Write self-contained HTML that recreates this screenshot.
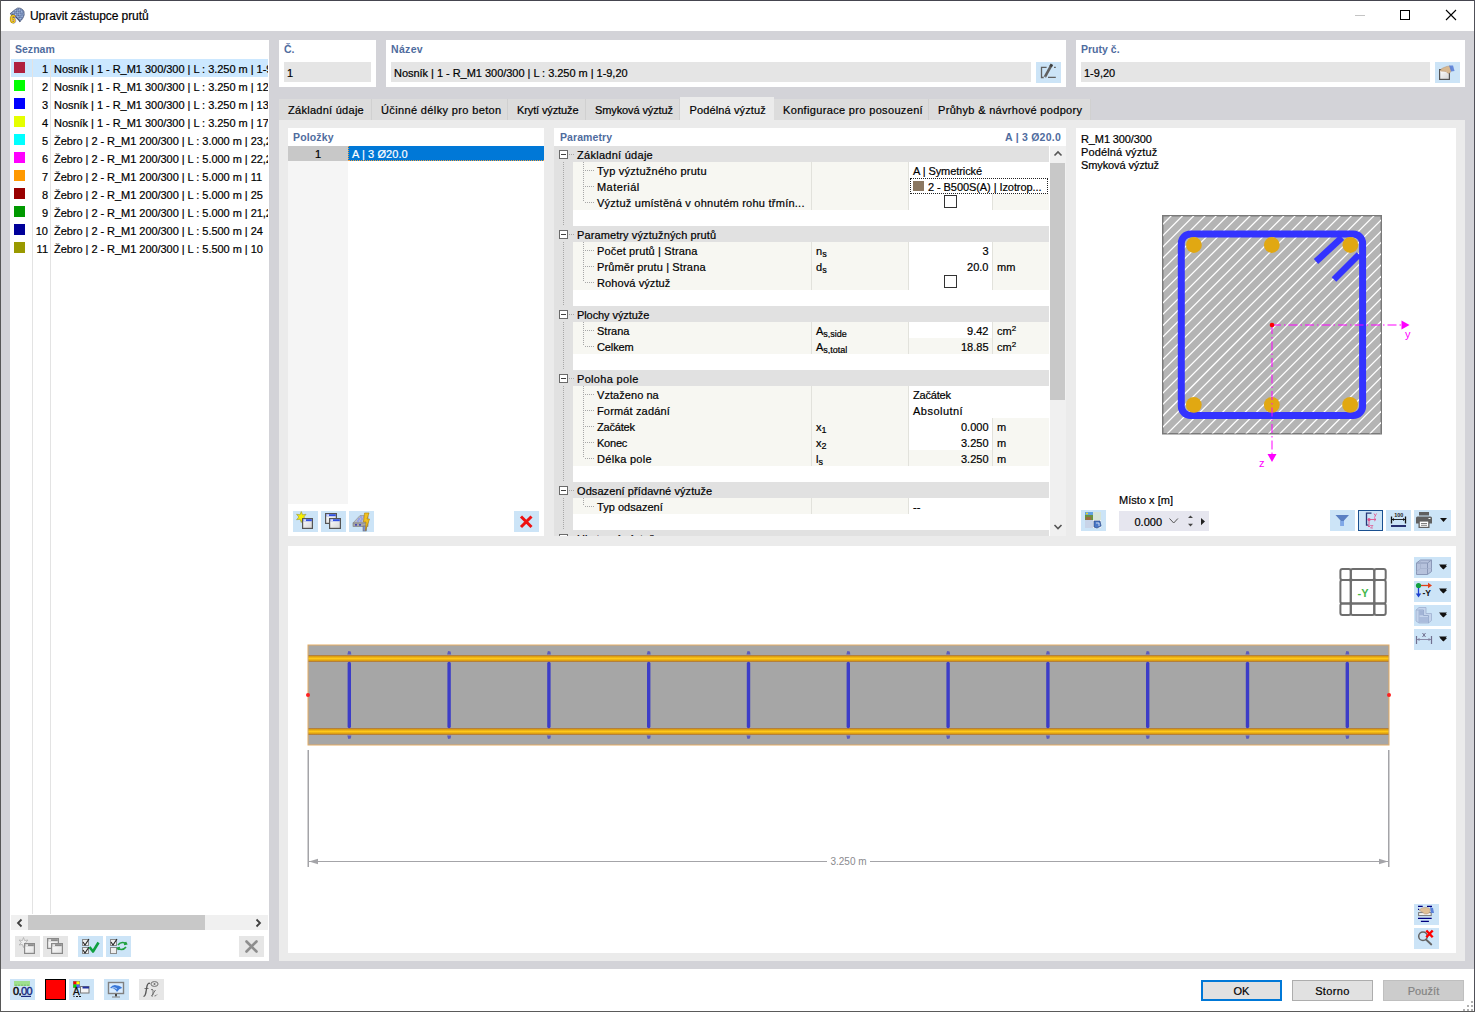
<!DOCTYPE html><html><head><meta charset="utf-8"><style>
*{margin:0;padding:0;box-sizing:border-box}
html,body{width:1475px;height:1012px;overflow:hidden;background:#fff}
body{position:relative;font-family:"Liberation Sans",sans-serif;font-size:11px;color:#000}
.a{position:absolute}
.t{white-space:nowrap;-webkit-text-stroke:0.2px currentColor}
svg{position:absolute;overflow:visible}
</style></head><body>
<div class="a" style="left:0px;top:0px;width:1475px;height:1012px;background:#ffffff;"></div>
<div class="a" style="left:1px;top:31px;width:1473px;height:938px;background:#d3d3d8;"></div>
<div class="a" style="left:0px;top:0px;width:1475px;height:1px;background:#45454f;"></div>
<div class="a" style="left:0px;top:0px;width:1px;height:1012px;background:#575757;"></div>
<div class="a" style="left:1474px;top:0px;width:1px;height:1012px;background:#505058;"></div>
<div class="a" style="left:0px;top:1011px;width:1475px;height:1px;background:#5a5a5a;"></div>
<div class="a t " style="left:30px;top:8.84px;font-size:12px;line-height:14px;color:#000;letter-spacing:-0.066px;">Upravit zástupce prutů</div>
<svg style="left:4px;top:4px" width="24" height="24" viewBox="0 0 24 24">
<defs><pattern id="chk" patternUnits="userSpaceOnUse" width="3" height="3" patternTransform="rotate(40)"><rect width="3" height="3" fill="#5a6e9a"/><rect width="1.5" height="1.5" fill="#b8cef0"/><rect x="1.5" y="1.5" width="1.5" height="1.5" fill="#8aa2d0"/></pattern></defs>
<path d="M6 9.8 Q10 6 13.5 4 Q18 3.5 20 7.5 Q21 11 19 14 Q17.5 16.5 16 17.5 L11 12.5 Z" fill="url(#chk)" stroke="#3a4668" stroke-width="0.6"/>
<path d="M11 12 L16 17.5 Q15.5 17.8 15 17.2" fill="none" stroke="#2a3658" stroke-width="0.8"/>
<text x="9" y="18.7" font-size="10" font-weight="bold" text-anchor="middle" fill="#f8d020" stroke="#5a4a10" stroke-width="0.9" paint-order="stroke" font-family="Liberation Sans">6</text>
</svg>
<div class="a" style="left:1355px;top:15px;width:10px;height:1px;background:#c4c4c4;"></div>
<div class="a" style="left:1400px;top:10px;width:10px;height:10px;border:1px solid #000"></div>
<svg style="left:1445px;top:9px" width="12" height="12"><path d="M1 1 L11 11 M11 1 L1 11" stroke="#000" stroke-width="1.1"/></svg>
<div class="a" style="left:10px;top:40px;width:259px;height:921px;background:#ffffff;"></div>
<div class="a" style="left:279px;top:40px;width:97px;height:47px;background:#ffffff;"></div>
<div class="a" style="left:386px;top:40px;width:680px;height:47px;background:#ffffff;"></div>
<div class="a" style="left:1076px;top:40px;width:389px;height:47px;background:#ffffff;"></div>
<div class="a" style="left:279px;top:120px;width:1186px;height:841px;background:#ebebeb;"></div>
<div class="a" style="left:288px;top:128px;width:256px;height:408px;background:#ffffff;"></div>
<div class="a" style="left:554px;top:128px;width:512px;height:408px;background:#ffffff;"></div>
<div class="a" style="left:1076px;top:128px;width:380px;height:408px;background:#ffffff;"></div>
<div class="a" style="left:288px;top:546px;width:1168px;height:407px;background:#ffffff;"></div>
<div class="a t " style="left:15px;top:42.86px;font-size:10.5px;line-height:13px;color:#4f6c9e;font-weight:bold;-webkit-text-stroke:0;letter-spacing:0.011px;">Seznam</div>
<div class="a t " style="left:284px;top:42.86px;font-size:10.5px;line-height:13px;color:#4f6c9e;font-weight:bold;-webkit-text-stroke:0;">Č.</div>
<div class="a t " style="left:391px;top:42.86px;font-size:10.5px;line-height:13px;color:#4f6c9e;font-weight:bold;-webkit-text-stroke:0;letter-spacing:0.322px;">Název</div>
<div class="a t " style="left:1081px;top:42.86px;font-size:10.5px;line-height:13px;color:#4f6c9e;font-weight:bold;-webkit-text-stroke:0;letter-spacing:0.015px;">Pruty č.</div>
<div class="a" style="left:284px;top:62px;width:87px;height:20px;background:#e5e5e5;"></div>
<div class="a t " style="left:287px;top:66.69px;font-size:11px;line-height:13px;color:#000;">1</div>
<div class="a" style="left:391px;top:62px;width:640px;height:20px;background:#e5e5e5;"></div>
<div class="a t " style="left:394px;top:66.69px;font-size:11px;line-height:13px;color:#000;letter-spacing:-0.030px;">Nosník | 1 - R_M1 300/300 | L : 3.250 m | 1-9,20</div>
<div class="a" style="left:1081px;top:62px;width:349px;height:20px;background:#e5e5e5;"></div>
<div class="a t " style="left:1084px;top:66.69px;font-size:11px;line-height:13px;color:#000;">1-9,20</div>
<div class="a" style="left:1036px;top:62px;width:25px;height:21px;background:#cce4f7;"></div>
<div class="a" style="left:1435px;top:62px;width:25px;height:21px;background:#cce4f7;"></div>
<div class="a" style="left:279px;top:99px;width:93px;height:21px;background:#dcdcdc;"></div>
<div class="a" style="left:371px;top:99px;width:1px;height:21px;background:#d0d0d0;"></div>
<div class="a t " style="left:288px;top:104.19px;font-size:11px;line-height:13px;color:#000;letter-spacing:0.274px;">Základní údaje</div>
<div class="a" style="left:372px;top:99px;width:136px;height:21px;background:#dcdcdc;"></div>
<div class="a" style="left:507px;top:99px;width:1px;height:21px;background:#d0d0d0;"></div>
<div class="a t " style="left:381px;top:104.19px;font-size:11px;line-height:13px;color:#000;letter-spacing:0.367px;">Účinné délky pro beton</div>
<div class="a" style="left:508px;top:99px;width:78px;height:21px;background:#dcdcdc;"></div>
<div class="a" style="left:585px;top:99px;width:1px;height:21px;background:#d0d0d0;"></div>
<div class="a t " style="left:517px;top:104.19px;font-size:11px;line-height:13px;color:#000;letter-spacing:-0.120px;">Krytí výztuže</div>
<div class="a" style="left:586px;top:99px;width:94px;height:21px;background:#dcdcdc;"></div>
<div class="a" style="left:679px;top:99px;width:1px;height:21px;background:#d0d0d0;"></div>
<div class="a t " style="left:595px;top:104.19px;font-size:11px;line-height:13px;color:#000;letter-spacing:-0.113px;">Smyková výztuž</div>
<div class="a" style="left:680px;top:97px;width:94px;height:23px;background:#ebebeb;"></div>
<div class="a t " style="left:689.5px;top:104.19px;font-size:11px;line-height:13px;color:#000;letter-spacing:0.131px;">Podélná výztuž</div>
<div class="a" style="left:774px;top:99px;width:155px;height:21px;background:#dcdcdc;"></div>
<div class="a" style="left:928px;top:99px;width:1px;height:21px;background:#d0d0d0;"></div>
<div class="a t " style="left:783px;top:104.19px;font-size:11px;line-height:13px;color:#000;letter-spacing:0.341px;">Konfigurace pro posouzení</div>
<div class="a" style="left:929px;top:99px;width:162px;height:21px;background:#dcdcdc;"></div>
<div class="a" style="left:1090px;top:99px;width:1px;height:21px;background:#d0d0d0;"></div>
<div class="a t " style="left:938px;top:104.19px;font-size:11px;line-height:13px;color:#000;letter-spacing:0.318px;">Průhyb &amp; návrhové podpory</div>
<div class="a" style="left:11px;top:59px;width:257px;height:18px;background:#cce8ff;"></div>
<div class="a" style="left:32px;top:59px;width:1px;height:855px;background:#e3e3e3;"></div>
<div class="a" style="left:50px;top:59px;width:1px;height:855px;background:#e3e3e3;"></div>
<div class="a" style="left:11px;top:59px;width:257px;height:200px;overflow:hidden">
<div class="a" style="left:3px;top:3px;width:11px;height:11px;background:#b0213f"></div>
<div class="a t" style="left:0px;width:37px;text-align:right;top:4.19px;line-height:13px">1</div>
<div class="a t" style="left:43px;top:4.19px;line-height:13px;letter-spacing:-0.030px">Nosník | 1 - R_M1 300/300 | L : 3.250 m | 1-9,20</div>
<div class="a" style="left:3px;top:21px;width:11px;height:11px;background:#00ff00"></div>
<div class="a t" style="left:0px;width:37px;text-align:right;top:22.19px;line-height:13px">2</div>
<div class="a t" style="left:43px;top:22.19px;line-height:13px;letter-spacing:-0.030px">Nosník | 1 - R_M1 300/300 | L : 3.250 m | 12,14</div>
<div class="a" style="left:3px;top:39px;width:11px;height:11px;background:#0000ff"></div>
<div class="a t" style="left:0px;width:37px;text-align:right;top:40.19px;line-height:13px">3</div>
<div class="a t" style="left:43px;top:40.19px;line-height:13px;letter-spacing:-0.030px">Nosník | 1 - R_M1 300/300 | L : 3.250 m | 13,15</div>
<div class="a" style="left:3px;top:57px;width:11px;height:11px;background:#e5ff00"></div>
<div class="a t" style="left:0px;width:37px;text-align:right;top:58.19px;line-height:13px">4</div>
<div class="a t" style="left:43px;top:58.19px;line-height:13px;letter-spacing:-0.030px">Nosník | 1 - R_M1 300/300 | L : 3.250 m | 17,19</div>
<div class="a" style="left:3px;top:75px;width:11px;height:11px;background:#00ffff"></div>
<div class="a t" style="left:0px;width:37px;text-align:right;top:76.19px;line-height:13px">5</div>
<div class="a t" style="left:43px;top:76.19px;line-height:13px;letter-spacing:-0.041px">Žebro | 2 - R_M1 200/300 | L : 3.000 m | 23,26</div>
<div class="a" style="left:3px;top:93px;width:11px;height:11px;background:#ff00ff"></div>
<div class="a t" style="left:0px;width:37px;text-align:right;top:94.19px;line-height:13px">6</div>
<div class="a t" style="left:43px;top:94.19px;line-height:13px;letter-spacing:-0.041px">Žebro | 2 - R_M1 200/300 | L : 5.000 m | 22,27</div>
<div class="a" style="left:3px;top:111px;width:11px;height:11px;background:#ff9900"></div>
<div class="a t" style="left:0px;width:37px;text-align:right;top:112.19px;line-height:13px">7</div>
<div class="a t" style="left:43px;top:112.19px;line-height:13px;letter-spacing:-0.041px">Žebro | 2 - R_M1 200/300 | L : 5.000 m | 11</div>
<div class="a" style="left:3px;top:129px;width:11px;height:11px;background:#990000"></div>
<div class="a t" style="left:0px;width:37px;text-align:right;top:130.19px;line-height:13px">8</div>
<div class="a t" style="left:43px;top:130.19px;line-height:13px;letter-spacing:-0.041px">Žebro | 2 - R_M1 200/300 | L : 5.000 m | 25</div>
<div class="a" style="left:3px;top:147px;width:11px;height:11px;background:#009900"></div>
<div class="a t" style="left:0px;width:37px;text-align:right;top:148.19px;line-height:13px">9</div>
<div class="a t" style="left:43px;top:148.19px;line-height:13px;letter-spacing:-0.041px">Žebro | 2 - R_M1 200/300 | L : 5.000 m | 21,28</div>
<div class="a" style="left:3px;top:165px;width:11px;height:11px;background:#000099"></div>
<div class="a t" style="left:0px;width:37px;text-align:right;top:166.19px;line-height:13px">10</div>
<div class="a t" style="left:43px;top:166.19px;line-height:13px;letter-spacing:-0.041px">Žebro | 2 - R_M1 200/300 | L : 5.500 m | 24</div>
<div class="a" style="left:3px;top:183px;width:11px;height:11px;background:#999900"></div>
<div class="a t" style="left:0px;width:37px;text-align:right;top:184.19px;line-height:13px">11</div>
<div class="a t" style="left:43px;top:184.19px;line-height:13px;letter-spacing:-0.041px">Žebro | 2 - R_M1 200/300 | L : 5.500 m | 10</div>
</div>
<div class="a" style="left:11px;top:915px;width:257px;height:15px;background:#f0f0f0;"></div>
<div class="a" style="left:28px;top:915px;width:177px;height:15px;background:#c8c8c8;"></div>
<svg style="left:15px;top:917px" width="10" height="12"><path d="M6.5 2.5 L3 6 L6.5 9.5" stroke="#404040" stroke-width="1.8" fill="none"/></svg>
<svg style="left:253px;top:917px" width="10" height="12"><path d="M3.5 2.5 L7 6 L3.5 9.5" stroke="#404040" stroke-width="1.8" fill="none"/></svg>
<div class="a" style="left:15px;top:936px;width:25px;height:21px;background:#e6e6e6;"></div>
<div class="a" style="left:43px;top:936px;width:25px;height:21px;background:#e6e6e6;"></div>
<div class="a" style="left:78px;top:936px;width:25px;height:21px;background:#cce4f7;"></div>
<div class="a" style="left:106px;top:936px;width:25px;height:21px;background:#cce4f7;"></div>
<div class="a" style="left:239px;top:936px;width:25px;height:21px;background:#e6e6e6;"></div>
<div class="a t " style="left:293px;top:130.86px;font-size:10.5px;line-height:13px;color:#4f6c9e;font-weight:bold;-webkit-text-stroke:0;letter-spacing:0.144px;">Položky</div>
<div class="a" style="left:288px;top:146px;width:60px;height:15px;background:#c8c8c8;"></div>
<div class="a" style="left:288px;top:161px;width:60px;height:343px;background:#f5f5f5;"></div>
<div class="a" style="left:348px;top:146px;width:196px;height:15px;background:#0078d7;"></div>
<div class="a" style="left:348px;top:146px;width:196px;height:15px;border-left:1px dotted #f0a040;border-bottom:1px dotted #f0a040"></div>
<div class="a t " style="left:288.0px;width:60px;text-align:center;top:147.69px;font-size:11px;line-height:13px;color:#000;">1</div>
<div class="a t " style="left:352px;top:147.69px;font-size:11px;line-height:13px;color:#fff;letter-spacing:0.087px;">A | 3 Ø20.0</div>
<div class="a" style="left:293px;top:511px;width:25px;height:21px;background:#cce4f7;"></div>
<div class="a" style="left:321px;top:511px;width:25px;height:21px;background:#cce4f7;"></div>
<div class="a" style="left:349px;top:511px;width:25px;height:21px;background:#cce4f7;"></div>
<div class="a" style="left:514px;top:511px;width:25px;height:21px;background:#cce4f7;"></div>
<div class="a t " style="left:560px;top:130.86px;font-size:10.5px;line-height:13px;color:#4f6c9e;font-weight:bold;-webkit-text-stroke:0;letter-spacing:0.084px;">Parametry</div>
<div class="a t " style="right:414px;top:130.86px;font-size:10.5px;line-height:13px;color:#4f6c9e;font-weight:bold;-webkit-text-stroke:0;letter-spacing:0.232px;">A | 3 Ø20.0</div>
<style>.tr sub{font-size:9px;vertical-align:-1.5px;line-height:0}.tr sup{font-size:8px;vertical-align:4px;line-height:0}</style>
<div class="a tr" style="left:554px;top:146px;width:495px;height:390px;overflow:hidden">
<div class="a" style="left:0px;top:0px;width:19px;height:390px;background:#e1e1e1;"></div>
<div class="a" style="left:9px;top:0px;width:1px;height:390px;background:repeating-linear-gradient(to bottom,#a8a8a8 0 1px,transparent 1px 2px)"></div>
<div class="a" style="left:0px;top:0px;width:495px;height:16px;background:#e1e1e1;"></div>
<div class="a" style="left:5px;top:4px;width:9px;height:9px;background:#fff;border:1px solid #6a6a6a"></div>
<div class="a" style="left:7px;top:8px;width:5px;height:1px;background:#404040;"></div>
<div class="a" style="left:15px;top:8px;width:6px;height:1px;background:repeating-linear-gradient(to right,#a8a8a8 0 1px,transparent 1px 2px)"></div>
<div class="a t" style="left:23px;top:2.19px;line-height:14px;font-size:11px;color:#000;letter-spacing:0.274px;">Základní údaje</div>
<div class="a" style="left:19px;top:16px;width:476px;height:16px;background:#f7f7f2;"></div>
<div class="a" style="left:354px;top:16px;width:141px;height:16px;background:#fff;"></div>
<div class="a" style="left:257px;top:16px;width:1px;height:16px;background:#e2e2dc;"></div>
<div class="a" style="left:354px;top:16px;width:1px;height:16px;background:#e2e2dc;"></div>
<div class="a" style="left:29px;top:16px;width:1px;height:16px;background:repeating-linear-gradient(to bottom,#a8a8a8 0 1px,transparent 1px 2px)"></div>
<div class="a" style="left:31px;top:24px;width:9px;height:1px;background:repeating-linear-gradient(to right,#a8a8a8 0 1px,transparent 1px 2px)"></div>
<div class="a t" style="left:43px;top:17.69px;line-height:14px;font-size:11px;color:#000;letter-spacing:0.261px;">Typ výztužného prutu</div>
<div class="a t" style="left:359px;top:17.69px;line-height:14px;font-size:11px;color:#000;letter-spacing:-0.076px;">A | Symetrické</div>
<div class="a" style="left:19px;top:32px;width:476px;height:16px;background:#f7f7f2;"></div>
<div class="a" style="left:354px;top:32px;width:141px;height:16px;background:#fff;"></div>
<div class="a" style="left:257px;top:32px;width:1px;height:16px;background:#e2e2dc;"></div>
<div class="a" style="left:354px;top:32px;width:1px;height:16px;background:#e2e2dc;"></div>
<div class="a" style="left:29px;top:32px;width:1px;height:16px;background:repeating-linear-gradient(to bottom,#a8a8a8 0 1px,transparent 1px 2px)"></div>
<div class="a" style="left:31px;top:40px;width:9px;height:1px;background:repeating-linear-gradient(to right,#a8a8a8 0 1px,transparent 1px 2px)"></div>
<div class="a t" style="left:43px;top:33.69px;line-height:14px;font-size:11px;color:#000;letter-spacing:0.432px;">Materiál</div>
<div class="a" style="left:356px;top:32px;width:138px;height:16px;background:transparent;border:1px dotted #222"></div>
<div class="a" style="left:359px;top:35px;width:11px;height:10px;background:#8b7862;"></div>
<div class="a t" style="left:374px;top:33.69px;line-height:14px;font-size:11px;color:#000;letter-spacing:-0.075px;">2 - B500S(A) | Izotrop...</div>
<div class="a" style="left:19px;top:48px;width:476px;height:16px;background:#f7f7f2;"></div>
<div class="a" style="left:354px;top:48px;width:84px;height:16px;background:#fff;"></div>
<div class="a" style="left:257px;top:48px;width:1px;height:16px;background:#e2e2dc;"></div>
<div class="a" style="left:354px;top:48px;width:1px;height:16px;background:#e2e2dc;"></div>
<div class="a" style="left:438px;top:48px;width:1px;height:16px;background:#e2e2dc;"></div>
<div class="a" style="left:29px;top:48px;width:1px;height:8px;background:repeating-linear-gradient(to bottom,#a8a8a8 0 1px,transparent 1px 2px)"></div>
<div class="a" style="left:31px;top:56px;width:9px;height:1px;background:repeating-linear-gradient(to right,#a8a8a8 0 1px,transparent 1px 2px)"></div>
<div class="a t" style="left:43px;top:49.69px;line-height:14px;font-size:11px;color:#000;letter-spacing:0.247px;">Výztuž umístěná v ohnutém rohu třmín...</div>
<div class="a" style="left:390px;top:49px;width:13px;height:13px;background:#fff;border:1px solid #333"></div>
<div class="a" style="left:19px;top:64px;width:476px;height:16px;background:#fff;"></div>
<div class="a" style="left:0px;top:80px;width:495px;height:16px;background:#e1e1e1;"></div>
<div class="a" style="left:5px;top:84px;width:9px;height:9px;background:#fff;border:1px solid #6a6a6a"></div>
<div class="a" style="left:7px;top:88px;width:5px;height:1px;background:#404040;"></div>
<div class="a" style="left:15px;top:88px;width:6px;height:1px;background:repeating-linear-gradient(to right,#a8a8a8 0 1px,transparent 1px 2px)"></div>
<div class="a t" style="left:23px;top:82.19px;line-height:14px;font-size:11px;color:#000;letter-spacing:0.108px;">Parametry výztužných prutů</div>
<div class="a" style="left:19px;top:96px;width:476px;height:16px;background:#f7f7f2;"></div>
<div class="a" style="left:354px;top:96px;width:84px;height:16px;background:#fff;"></div>
<div class="a" style="left:257px;top:96px;width:1px;height:16px;background:#e2e2dc;"></div>
<div class="a" style="left:354px;top:96px;width:1px;height:16px;background:#e2e2dc;"></div>
<div class="a" style="left:438px;top:96px;width:1px;height:16px;background:#e2e2dc;"></div>
<div class="a" style="left:29px;top:96px;width:1px;height:16px;background:repeating-linear-gradient(to bottom,#a8a8a8 0 1px,transparent 1px 2px)"></div>
<div class="a" style="left:31px;top:104px;width:9px;height:1px;background:repeating-linear-gradient(to right,#a8a8a8 0 1px,transparent 1px 2px)"></div>
<div class="a t" style="left:43px;top:97.69px;line-height:14px;font-size:11px;color:#000;letter-spacing:0.146px;">Počet prutů | Strana</div>
<div class="a t" style="left:262px;top:97.69px;line-height:14px;font-size:11px;color:#000;">n<sub>s</sub></div>
<div class="a t" style="left:354.5px;width:80px;text-align:right;top:97.69px;line-height:14px;font-size:11px;color:#000;">3</div>
<div class="a" style="left:19px;top:112px;width:476px;height:16px;background:#f7f7f2;"></div>
<div class="a" style="left:354px;top:112px;width:84px;height:16px;background:#fff;"></div>
<div class="a" style="left:257px;top:112px;width:1px;height:16px;background:#e2e2dc;"></div>
<div class="a" style="left:354px;top:112px;width:1px;height:16px;background:#e2e2dc;"></div>
<div class="a" style="left:438px;top:112px;width:1px;height:16px;background:#e2e2dc;"></div>
<div class="a" style="left:29px;top:112px;width:1px;height:16px;background:repeating-linear-gradient(to bottom,#a8a8a8 0 1px,transparent 1px 2px)"></div>
<div class="a" style="left:31px;top:120px;width:9px;height:1px;background:repeating-linear-gradient(to right,#a8a8a8 0 1px,transparent 1px 2px)"></div>
<div class="a t" style="left:43px;top:113.69px;line-height:14px;font-size:11px;color:#000;letter-spacing:0.147px;">Průměr prutu | Strana</div>
<div class="a t" style="left:262px;top:113.69px;line-height:14px;font-size:11px;color:#000;">d<sub>s</sub></div>
<div class="a t" style="left:354.5px;width:80px;text-align:right;top:113.69px;line-height:14px;font-size:11px;color:#000;">20.0</div>
<div class="a t" style="left:443px;top:113.69px;line-height:14px;font-size:11px;color:#000;">mm</div>
<div class="a" style="left:19px;top:128px;width:476px;height:16px;background:#f7f7f2;"></div>
<div class="a" style="left:354px;top:128px;width:84px;height:16px;background:#fff;"></div>
<div class="a" style="left:257px;top:128px;width:1px;height:16px;background:#e2e2dc;"></div>
<div class="a" style="left:354px;top:128px;width:1px;height:16px;background:#e2e2dc;"></div>
<div class="a" style="left:438px;top:128px;width:1px;height:16px;background:#e2e2dc;"></div>
<div class="a" style="left:29px;top:128px;width:1px;height:8px;background:repeating-linear-gradient(to bottom,#a8a8a8 0 1px,transparent 1px 2px)"></div>
<div class="a" style="left:31px;top:136px;width:9px;height:1px;background:repeating-linear-gradient(to right,#a8a8a8 0 1px,transparent 1px 2px)"></div>
<div class="a t" style="left:43px;top:129.69px;line-height:14px;font-size:11px;color:#000;letter-spacing:0.096px;">Rohová výztuž</div>
<div class="a" style="left:390px;top:129px;width:13px;height:13px;background:#fff;border:1px solid #333"></div>
<div class="a" style="left:19px;top:144px;width:476px;height:16px;background:#fff;"></div>
<div class="a" style="left:0px;top:160px;width:495px;height:16px;background:#e1e1e1;"></div>
<div class="a" style="left:5px;top:164px;width:9px;height:9px;background:#fff;border:1px solid #6a6a6a"></div>
<div class="a" style="left:7px;top:168px;width:5px;height:1px;background:#404040;"></div>
<div class="a" style="left:15px;top:168px;width:6px;height:1px;background:repeating-linear-gradient(to right,#a8a8a8 0 1px,transparent 1px 2px)"></div>
<div class="a t" style="left:23px;top:162.19px;line-height:14px;font-size:11px;color:#000;letter-spacing:-0.080px;">Plochy výztuže</div>
<div class="a" style="left:19px;top:176px;width:476px;height:16px;background:#f7f7f2;"></div>
<div class="a" style="left:354px;top:176px;width:84px;height:16px;background:#fff;"></div>
<div class="a" style="left:257px;top:176px;width:1px;height:16px;background:#e2e2dc;"></div>
<div class="a" style="left:354px;top:176px;width:1px;height:16px;background:#e2e2dc;"></div>
<div class="a" style="left:438px;top:176px;width:1px;height:16px;background:#e2e2dc;"></div>
<div class="a" style="left:29px;top:176px;width:1px;height:16px;background:repeating-linear-gradient(to bottom,#a8a8a8 0 1px,transparent 1px 2px)"></div>
<div class="a" style="left:31px;top:184px;width:9px;height:1px;background:repeating-linear-gradient(to right,#a8a8a8 0 1px,transparent 1px 2px)"></div>
<div class="a t" style="left:43px;top:177.69px;line-height:14px;font-size:11px;color:#000;">Strana</div>
<div class="a t" style="left:262px;top:177.69px;line-height:14px;font-size:11px;color:#000;">A<sub>s,side</sub></div>
<div class="a t" style="left:354.5px;width:80px;text-align:right;top:177.69px;line-height:14px;font-size:11px;color:#000;">9.42</div>
<div class="a t" style="left:443px;top:177.69px;line-height:14px;font-size:11px;color:#000;">cm<sup>2</sup></div>
<div class="a" style="left:19px;top:192px;width:476px;height:16px;background:#f7f7f2;"></div>
<div class="a" style="left:257px;top:192px;width:1px;height:16px;background:#e2e2dc;"></div>
<div class="a" style="left:354px;top:192px;width:1px;height:16px;background:#e2e2dc;"></div>
<div class="a" style="left:438px;top:192px;width:1px;height:16px;background:#e2e2dc;"></div>
<div class="a" style="left:29px;top:192px;width:1px;height:8px;background:repeating-linear-gradient(to bottom,#a8a8a8 0 1px,transparent 1px 2px)"></div>
<div class="a" style="left:31px;top:200px;width:9px;height:1px;background:repeating-linear-gradient(to right,#a8a8a8 0 1px,transparent 1px 2px)"></div>
<div class="a t" style="left:43px;top:193.69px;line-height:14px;font-size:11px;color:#000;letter-spacing:-0.125px;">Celkem</div>
<div class="a t" style="left:262px;top:193.69px;line-height:14px;font-size:11px;color:#000;">A<sub>s,total</sub></div>
<div class="a t" style="left:354.5px;width:80px;text-align:right;top:193.69px;line-height:14px;font-size:11px;color:#000;">18.85</div>
<div class="a t" style="left:443px;top:193.69px;line-height:14px;font-size:11px;color:#000;">cm<sup>2</sup></div>
<div class="a" style="left:19px;top:208px;width:476px;height:16px;background:#fff;"></div>
<div class="a" style="left:0px;top:224px;width:495px;height:16px;background:#e1e1e1;"></div>
<div class="a" style="left:5px;top:228px;width:9px;height:9px;background:#fff;border:1px solid #6a6a6a"></div>
<div class="a" style="left:7px;top:232px;width:5px;height:1px;background:#404040;"></div>
<div class="a" style="left:15px;top:232px;width:6px;height:1px;background:repeating-linear-gradient(to right,#a8a8a8 0 1px,transparent 1px 2px)"></div>
<div class="a t" style="left:23px;top:226.19px;line-height:14px;font-size:11px;color:#000;letter-spacing:0.321px;">Poloha pole</div>
<div class="a" style="left:19px;top:240px;width:476px;height:16px;background:#f7f7f2;"></div>
<div class="a" style="left:354px;top:240px;width:141px;height:16px;background:#fff;"></div>
<div class="a" style="left:257px;top:240px;width:1px;height:16px;background:#e2e2dc;"></div>
<div class="a" style="left:354px;top:240px;width:1px;height:16px;background:#e2e2dc;"></div>
<div class="a" style="left:29px;top:240px;width:1px;height:16px;background:repeating-linear-gradient(to bottom,#a8a8a8 0 1px,transparent 1px 2px)"></div>
<div class="a" style="left:31px;top:248px;width:9px;height:1px;background:repeating-linear-gradient(to right,#a8a8a8 0 1px,transparent 1px 2px)"></div>
<div class="a t" style="left:43px;top:241.69px;line-height:14px;font-size:11px;color:#000;letter-spacing:0.056px;">Vztaženo na</div>
<div class="a t" style="left:359px;top:241.69px;line-height:14px;font-size:11px;color:#000;letter-spacing:-0.188px;">Začátek</div>
<div class="a" style="left:19px;top:256px;width:476px;height:16px;background:#f7f7f2;"></div>
<div class="a" style="left:354px;top:256px;width:141px;height:16px;background:#fff;"></div>
<div class="a" style="left:257px;top:256px;width:1px;height:16px;background:#e2e2dc;"></div>
<div class="a" style="left:354px;top:256px;width:1px;height:16px;background:#e2e2dc;"></div>
<div class="a" style="left:29px;top:256px;width:1px;height:16px;background:repeating-linear-gradient(to bottom,#a8a8a8 0 1px,transparent 1px 2px)"></div>
<div class="a" style="left:31px;top:264px;width:9px;height:1px;background:repeating-linear-gradient(to right,#a8a8a8 0 1px,transparent 1px 2px)"></div>
<div class="a t" style="left:43px;top:257.69px;line-height:14px;font-size:11px;color:#000;letter-spacing:0.153px;">Formát zadání</div>
<div class="a t" style="left:359px;top:257.69px;line-height:14px;font-size:11px;color:#000;letter-spacing:0.474px;">Absolutní</div>
<div class="a" style="left:19px;top:272px;width:476px;height:16px;background:#f7f7f2;"></div>
<div class="a" style="left:354px;top:272px;width:84px;height:16px;background:#fff;"></div>
<div class="a" style="left:257px;top:272px;width:1px;height:16px;background:#e2e2dc;"></div>
<div class="a" style="left:354px;top:272px;width:1px;height:16px;background:#e2e2dc;"></div>
<div class="a" style="left:438px;top:272px;width:1px;height:16px;background:#e2e2dc;"></div>
<div class="a" style="left:29px;top:272px;width:1px;height:16px;background:repeating-linear-gradient(to bottom,#a8a8a8 0 1px,transparent 1px 2px)"></div>
<div class="a" style="left:31px;top:280px;width:9px;height:1px;background:repeating-linear-gradient(to right,#a8a8a8 0 1px,transparent 1px 2px)"></div>
<div class="a t" style="left:43px;top:273.69px;line-height:14px;font-size:11px;color:#000;letter-spacing:-0.188px;">Začátek</div>
<div class="a t" style="left:262px;top:273.69px;line-height:14px;font-size:11px;color:#000;">x<sub>1</sub></div>
<div class="a t" style="left:354.5px;width:80px;text-align:right;top:273.69px;line-height:14px;font-size:11px;color:#000;">0.000</div>
<div class="a t" style="left:443px;top:273.69px;line-height:14px;font-size:11px;color:#000;">m</div>
<div class="a" style="left:19px;top:288px;width:476px;height:16px;background:#f7f7f2;"></div>
<div class="a" style="left:354px;top:288px;width:84px;height:16px;background:#fff;"></div>
<div class="a" style="left:257px;top:288px;width:1px;height:16px;background:#e2e2dc;"></div>
<div class="a" style="left:354px;top:288px;width:1px;height:16px;background:#e2e2dc;"></div>
<div class="a" style="left:438px;top:288px;width:1px;height:16px;background:#e2e2dc;"></div>
<div class="a" style="left:29px;top:288px;width:1px;height:16px;background:repeating-linear-gradient(to bottom,#a8a8a8 0 1px,transparent 1px 2px)"></div>
<div class="a" style="left:31px;top:296px;width:9px;height:1px;background:repeating-linear-gradient(to right,#a8a8a8 0 1px,transparent 1px 2px)"></div>
<div class="a t" style="left:43px;top:289.69px;line-height:14px;font-size:11px;color:#000;letter-spacing:-0.222px;">Konec</div>
<div class="a t" style="left:262px;top:289.69px;line-height:14px;font-size:11px;color:#000;">x<sub>2</sub></div>
<div class="a t" style="left:354.5px;width:80px;text-align:right;top:289.69px;line-height:14px;font-size:11px;color:#000;">3.250</div>
<div class="a t" style="left:443px;top:289.69px;line-height:14px;font-size:11px;color:#000;">m</div>
<div class="a" style="left:19px;top:304px;width:476px;height:16px;background:#f7f7f2;"></div>
<div class="a" style="left:257px;top:304px;width:1px;height:16px;background:#e2e2dc;"></div>
<div class="a" style="left:354px;top:304px;width:1px;height:16px;background:#e2e2dc;"></div>
<div class="a" style="left:438px;top:304px;width:1px;height:16px;background:#e2e2dc;"></div>
<div class="a" style="left:29px;top:304px;width:1px;height:8px;background:repeating-linear-gradient(to bottom,#a8a8a8 0 1px,transparent 1px 2px)"></div>
<div class="a" style="left:31px;top:312px;width:9px;height:1px;background:repeating-linear-gradient(to right,#a8a8a8 0 1px,transparent 1px 2px)"></div>
<div class="a t" style="left:43px;top:305.69px;line-height:14px;font-size:11px;color:#000;letter-spacing:0.294px;">Délka pole</div>
<div class="a t" style="left:262px;top:305.69px;line-height:14px;font-size:11px;color:#000;">l<sub>s</sub></div>
<div class="a t" style="left:354.5px;width:80px;text-align:right;top:305.69px;line-height:14px;font-size:11px;color:#000;">3.250</div>
<div class="a t" style="left:443px;top:305.69px;line-height:14px;font-size:11px;color:#000;">m</div>
<div class="a" style="left:19px;top:320px;width:476px;height:16px;background:#fff;"></div>
<div class="a" style="left:0px;top:336px;width:495px;height:16px;background:#e1e1e1;"></div>
<div class="a" style="left:5px;top:340px;width:9px;height:9px;background:#fff;border:1px solid #6a6a6a"></div>
<div class="a" style="left:7px;top:344px;width:5px;height:1px;background:#404040;"></div>
<div class="a" style="left:15px;top:344px;width:6px;height:1px;background:repeating-linear-gradient(to right,#a8a8a8 0 1px,transparent 1px 2px)"></div>
<div class="a t" style="left:23px;top:338.19px;line-height:14px;font-size:11px;color:#000;letter-spacing:0.080px;">Odsazení přídavné výztuže</div>
<div class="a" style="left:19px;top:352px;width:476px;height:16px;background:#f7f7f2;"></div>
<div class="a" style="left:354px;top:352px;width:141px;height:16px;background:#fff;"></div>
<div class="a" style="left:257px;top:352px;width:1px;height:16px;background:#e2e2dc;"></div>
<div class="a" style="left:354px;top:352px;width:1px;height:16px;background:#e2e2dc;"></div>
<div class="a" style="left:29px;top:352px;width:1px;height:8px;background:repeating-linear-gradient(to bottom,#a8a8a8 0 1px,transparent 1px 2px)"></div>
<div class="a" style="left:31px;top:360px;width:9px;height:1px;background:repeating-linear-gradient(to right,#a8a8a8 0 1px,transparent 1px 2px)"></div>
<div class="a t" style="left:43px;top:353.69px;line-height:14px;font-size:11px;color:#000;letter-spacing:0.030px;">Typ odsazení</div>
<div class="a t" style="left:359px;top:353.69px;line-height:14px;font-size:11px;color:#000;">--</div>
<div class="a" style="left:19px;top:368px;width:476px;height:16px;background:#fff;"></div>
<div class="a" style="left:0px;top:384px;width:495px;height:16px;background:#e1e1e1;"></div>
<div class="a" style="left:5px;top:388px;width:9px;height:9px;background:#fff;border:1px solid #6a6a6a"></div>
<div class="a" style="left:7px;top:392px;width:5px;height:1px;background:#404040;"></div>
<div class="a" style="left:15px;top:392px;width:6px;height:1px;background:repeating-linear-gradient(to right,#a8a8a8 0 1px,transparent 1px 2px)"></div>
<div class="a t" style="left:23px;top:386.19px;line-height:14px;font-size:11px;color:#000;">Ukotvení výztuže</div>
</div>
<div class="a" style="left:1050px;top:146px;width:16px;height:390px;background:#f0f0f0;"></div>
<div class="a" style="left:1050px;top:163px;width:15px;height:237px;background:#c8c8c8;"></div>
<svg style="left:1052px;top:149px" width="12" height="10"><path d="M2.5 6.5 L6 3 L9.5 6.5" stroke="#555" stroke-width="1.6" fill="none"/></svg>
<svg style="left:1052px;top:522px" width="12" height="10"><path d="M2.5 3 L6 6.5 L9.5 3" stroke="#555" stroke-width="1.6" fill="none"/></svg>
<div class="a t " style="left:1081px;top:132.69px;font-size:11px;line-height:13px;color:#000;letter-spacing:-0.113px;">R_M1 300/300</div>
<div class="a t " style="left:1081px;top:145.69px;font-size:11px;line-height:13px;color:#000;letter-spacing:0.131px;">Podélná výztuž</div>
<div class="a t " style="left:1081px;top:158.69px;font-size:11px;line-height:13px;color:#000;letter-spacing:-0.113px;">Smyková výztuž</div>
<svg style="left:0;top:0" width="1475" height="1012">
<defs>
<pattern id="hatch" patternUnits="userSpaceOnUse" width="11.26" height="11.26" patternTransform="translate(1163 434) rotate(-40)">
<rect width="11.26" height="11.26" fill="#b4b4b4"/><rect x="0" y="0" width="1.3" height="11.26" fill="#ffffff"/></pattern>
<clipPath id="secclip"><rect x="1163" y="216" width="218" height="217.5"/></clipPath>
</defs>
<rect x="1162.75" y="215.75" width="218.5" height="218" fill="#b4b4b4" stroke="#7a7a7a" stroke-width="1.5"/>
<g clip-path="url(#secclip)"><line x1="863.00" y1="434" x2="1163.00" y2="134" stroke="#fff" stroke-width="1.25"/><line x1="874.26" y1="434" x2="1174.26" y2="134" stroke="#fff" stroke-width="1.25"/><line x1="885.52" y1="434" x2="1185.52" y2="134" stroke="#fff" stroke-width="1.25"/><line x1="896.78" y1="434" x2="1196.78" y2="134" stroke="#fff" stroke-width="1.25"/><line x1="908.04" y1="434" x2="1208.04" y2="134" stroke="#fff" stroke-width="1.25"/><line x1="919.30" y1="434" x2="1219.30" y2="134" stroke="#fff" stroke-width="1.25"/><line x1="930.56" y1="434" x2="1230.56" y2="134" stroke="#fff" stroke-width="1.25"/><line x1="941.82" y1="434" x2="1241.82" y2="134" stroke="#fff" stroke-width="1.25"/><line x1="953.08" y1="434" x2="1253.08" y2="134" stroke="#fff" stroke-width="1.25"/><line x1="964.34" y1="434" x2="1264.34" y2="134" stroke="#fff" stroke-width="1.25"/><line x1="975.60" y1="434" x2="1275.60" y2="134" stroke="#fff" stroke-width="1.25"/><line x1="986.86" y1="434" x2="1286.86" y2="134" stroke="#fff" stroke-width="1.25"/><line x1="998.12" y1="434" x2="1298.12" y2="134" stroke="#fff" stroke-width="1.25"/><line x1="1009.38" y1="434" x2="1309.38" y2="134" stroke="#fff" stroke-width="1.25"/><line x1="1020.64" y1="434" x2="1320.64" y2="134" stroke="#fff" stroke-width="1.25"/><line x1="1031.90" y1="434" x2="1331.90" y2="134" stroke="#fff" stroke-width="1.25"/><line x1="1043.16" y1="434" x2="1343.16" y2="134" stroke="#fff" stroke-width="1.25"/><line x1="1054.42" y1="434" x2="1354.42" y2="134" stroke="#fff" stroke-width="1.25"/><line x1="1065.68" y1="434" x2="1365.68" y2="134" stroke="#fff" stroke-width="1.25"/><line x1="1076.94" y1="434" x2="1376.94" y2="134" stroke="#fff" stroke-width="1.25"/><line x1="1088.20" y1="434" x2="1388.20" y2="134" stroke="#fff" stroke-width="1.25"/><line x1="1099.46" y1="434" x2="1399.46" y2="134" stroke="#fff" stroke-width="1.25"/><line x1="1110.72" y1="434" x2="1410.72" y2="134" stroke="#fff" stroke-width="1.25"/><line x1="1121.98" y1="434" x2="1421.98" y2="134" stroke="#fff" stroke-width="1.25"/><line x1="1133.24" y1="434" x2="1433.24" y2="134" stroke="#fff" stroke-width="1.25"/><line x1="1144.50" y1="434" x2="1444.50" y2="134" stroke="#fff" stroke-width="1.25"/><line x1="1155.76" y1="434" x2="1455.76" y2="134" stroke="#fff" stroke-width="1.25"/><line x1="1167.02" y1="434" x2="1467.02" y2="134" stroke="#fff" stroke-width="1.25"/><line x1="1178.28" y1="434" x2="1478.28" y2="134" stroke="#fff" stroke-width="1.25"/><line x1="1189.54" y1="434" x2="1489.54" y2="134" stroke="#fff" stroke-width="1.25"/><line x1="1200.80" y1="434" x2="1500.80" y2="134" stroke="#fff" stroke-width="1.25"/><line x1="1212.06" y1="434" x2="1512.06" y2="134" stroke="#fff" stroke-width="1.25"/><line x1="1223.32" y1="434" x2="1523.32" y2="134" stroke="#fff" stroke-width="1.25"/><line x1="1234.58" y1="434" x2="1534.58" y2="134" stroke="#fff" stroke-width="1.25"/><line x1="1245.84" y1="434" x2="1545.84" y2="134" stroke="#fff" stroke-width="1.25"/><line x1="1257.10" y1="434" x2="1557.10" y2="134" stroke="#fff" stroke-width="1.25"/><line x1="1268.36" y1="434" x2="1568.36" y2="134" stroke="#fff" stroke-width="1.25"/><line x1="1279.62" y1="434" x2="1579.62" y2="134" stroke="#fff" stroke-width="1.25"/><line x1="1290.88" y1="434" x2="1590.88" y2="134" stroke="#fff" stroke-width="1.25"/><line x1="1302.14" y1="434" x2="1602.14" y2="134" stroke="#fff" stroke-width="1.25"/><line x1="1313.40" y1="434" x2="1613.40" y2="134" stroke="#fff" stroke-width="1.25"/><line x1="1324.66" y1="434" x2="1624.66" y2="134" stroke="#fff" stroke-width="1.25"/><line x1="1335.92" y1="434" x2="1635.92" y2="134" stroke="#fff" stroke-width="1.25"/><line x1="1347.18" y1="434" x2="1647.18" y2="134" stroke="#fff" stroke-width="1.25"/><line x1="1358.44" y1="434" x2="1658.44" y2="134" stroke="#fff" stroke-width="1.25"/><line x1="1369.70" y1="434" x2="1669.70" y2="134" stroke="#fff" stroke-width="1.25"/><line x1="1380.96" y1="434" x2="1680.96" y2="134" stroke="#fff" stroke-width="1.25"/><line x1="1392.22" y1="434" x2="1692.22" y2="134" stroke="#fff" stroke-width="1.25"/><line x1="1403.48" y1="434" x2="1703.48" y2="134" stroke="#fff" stroke-width="1.25"/><line x1="1414.74" y1="434" x2="1714.74" y2="134" stroke="#fff" stroke-width="1.25"/></g>
<rect x="1181.3" y="234" width="181.3" height="181.5" rx="9.3" ry="9.3" fill="none" stroke="#3333ff" stroke-width="7"/>
<line x1="1342" y1="237.5" x2="1316" y2="261.5" stroke="#3333ff" stroke-width="6.5"/>
<line x1="1359" y1="254.5" x2="1334" y2="279.5" stroke="#3333ff" stroke-width="6.5"/>
<g fill="#e1a812">
<circle cx="1193.9" cy="245" r="7.9"/><circle cx="1271.8" cy="245" r="7.9"/><circle cx="1350.3" cy="245" r="7.9"/>
<circle cx="1193.8" cy="404.8" r="7.9"/><circle cx="1271.8" cy="404.8" r="7.9"/><circle cx="1350.1" cy="404.8" r="7.9"/>
</g>
<g stroke="#ff00ff" stroke-width="1" fill="none" stroke-dasharray="9 3 1.5 3">
<line x1="1272" y1="325" x2="1402" y2="325"/>
<line x1="1272" y1="325" x2="1272" y2="454"/>
</g>
<path d="M1401.5 320.5 L1409.5 325 L1401.5 329.5 Z" fill="#ff00ff"/>
<path d="M1267.5 454 L1272 462 L1276.5 454 Z" fill="#ff00ff"/>
<circle cx="1272" cy="325" r="2.3" fill="#ff0000"/>
<text x="1405" y="338" font-size="11" fill="#ff00ff" font-family="Liberation Sans">y</text>
<text x="1259" y="467" font-size="11" fill="#ff00ff" font-family="Liberation Sans">z</text>
</svg>
<div class="a t " style="left:1119px;top:494.19px;font-size:11px;line-height:13px;color:#000;letter-spacing:0.028px;">Místo x [m]</div>
<div class="a" style="left:1081px;top:510px;width:25px;height:21px;background:#cce4f7;"></div>
<div class="a" style="left:1119px;top:511px;width:90px;height:20px;background:#e6e6ef;"></div>
<div class="a t " style="right:313px;top:515.69px;font-size:11px;line-height:13px;color:#000;">0.000</div>
<svg style="left:1165px;top:514px" width="12" height="12"><path d="M4.5 4.5 L8.7 9 L12.9 4.5" stroke="#555" stroke-width="1" fill="none"/></svg>
<svg style="left:1185px;top:512px" width="10" height="18"><path d="M3 6 L5.5 3.4 L8 6 Z M3 11.8 L5.5 14.6 L8 11.8 Z" fill="#444"/></svg>
<svg style="left:1198px;top:514px" width="10" height="14"><path d="M3 4 L7 7.6 L3 11.2 Z" fill="#222"/></svg>
<div class="a" style="left:1330px;top:510px;width:25px;height:21px;background:#cce4f7;"></div>
<div class="a" style="left:1358px;top:510px;width:25px;height:21px;background:#cce4f7;border:1.5px solid #1a5090"></div>
<div class="a" style="left:1386px;top:510px;width:25px;height:21px;background:#cce4f7;"></div>
<div class="a" style="left:1414px;top:510px;width:37px;height:21px;background:#cce4f7;"></div>
<svg style="left:0;top:0" width="1475" height="1012"><defs><linearGradient id="rb" x1="0" y1="0" x2="0" y2="1"><stop offset="0" stop-color="#9a6e5a"/><stop offset="0.18" stop-color="#d89a10"/><stop offset="0.5" stop-color="#ffc818"/><stop offset="0.82" stop-color="#d89a10"/><stop offset="1" stop-color="#9a6e5a"/></linearGradient></defs><rect x="308" y="645" width="1081" height="100" fill="#a6a6a6"/><rect x="308" y="645" width="1081" height="100" fill="none" stroke="#e4ab62" stroke-width="1"/><rect x="308.5" y="655" width="1080" height="7" fill="url(#rb)"/><rect x="308.5" y="728" width="1080" height="7" fill="url(#rb)"/><line x1="349.3" y1="663.5" x2="349.3" y2="726.5" stroke="#3c3cc8" stroke-width="3.4" stroke-linecap="round"/><path d="M347.3 654.5 L348.3 651 L350.8 651.5 L351.3 654.5 Z" fill="#4a4ac0" opacity="0.8"/><path d="M347.3 735.5 L348.3 739 L350.8 738.5 L351.3 735.5 Z" fill="#4a4ac0" opacity="0.8"/><line x1="449.1" y1="663.5" x2="449.1" y2="726.5" stroke="#3c3cc8" stroke-width="3.4" stroke-linecap="round"/><path d="M447.1 654.5 L448.1 651 L450.6 651.5 L451.1 654.5 Z" fill="#4a4ac0" opacity="0.8"/><path d="M447.1 735.5 L448.1 739 L450.6 738.5 L451.1 735.5 Z" fill="#4a4ac0" opacity="0.8"/><line x1="548.9" y1="663.5" x2="548.9" y2="726.5" stroke="#3c3cc8" stroke-width="3.4" stroke-linecap="round"/><path d="M546.9 654.5 L547.9 651 L550.4 651.5 L550.9 654.5 Z" fill="#4a4ac0" opacity="0.8"/><path d="M546.9 735.5 L547.9 739 L550.4 738.5 L550.9 735.5 Z" fill="#4a4ac0" opacity="0.8"/><line x1="648.7" y1="663.5" x2="648.7" y2="726.5" stroke="#3c3cc8" stroke-width="3.4" stroke-linecap="round"/><path d="M646.7 654.5 L647.7 651 L650.2 651.5 L650.7 654.5 Z" fill="#4a4ac0" opacity="0.8"/><path d="M646.7 735.5 L647.7 739 L650.2 738.5 L650.7 735.5 Z" fill="#4a4ac0" opacity="0.8"/><line x1="748.5" y1="663.5" x2="748.5" y2="726.5" stroke="#3c3cc8" stroke-width="3.4" stroke-linecap="round"/><path d="M746.5 654.5 L747.5 651 L750.0 651.5 L750.5 654.5 Z" fill="#4a4ac0" opacity="0.8"/><path d="M746.5 735.5 L747.5 739 L750.0 738.5 L750.5 735.5 Z" fill="#4a4ac0" opacity="0.8"/><line x1="848.3" y1="663.5" x2="848.3" y2="726.5" stroke="#3c3cc8" stroke-width="3.4" stroke-linecap="round"/><path d="M846.3 654.5 L847.3 651 L849.8 651.5 L850.3 654.5 Z" fill="#4a4ac0" opacity="0.8"/><path d="M846.3 735.5 L847.3 739 L849.8 738.5 L850.3 735.5 Z" fill="#4a4ac0" opacity="0.8"/><line x1="948.1" y1="663.5" x2="948.1" y2="726.5" stroke="#3c3cc8" stroke-width="3.4" stroke-linecap="round"/><path d="M946.1 654.5 L947.1 651 L949.6 651.5 L950.1 654.5 Z" fill="#4a4ac0" opacity="0.8"/><path d="M946.1 735.5 L947.1 739 L949.6 738.5 L950.1 735.5 Z" fill="#4a4ac0" opacity="0.8"/><line x1="1047.9" y1="663.5" x2="1047.9" y2="726.5" stroke="#3c3cc8" stroke-width="3.4" stroke-linecap="round"/><path d="M1045.9 654.5 L1046.9 651 L1049.4 651.5 L1049.9 654.5 Z" fill="#4a4ac0" opacity="0.8"/><path d="M1045.9 735.5 L1046.9 739 L1049.4 738.5 L1049.9 735.5 Z" fill="#4a4ac0" opacity="0.8"/><line x1="1147.7" y1="663.5" x2="1147.7" y2="726.5" stroke="#3c3cc8" stroke-width="3.4" stroke-linecap="round"/><path d="M1145.7 654.5 L1146.7 651 L1149.2 651.5 L1149.7 654.5 Z" fill="#4a4ac0" opacity="0.8"/><path d="M1145.7 735.5 L1146.7 739 L1149.2 738.5 L1149.7 735.5 Z" fill="#4a4ac0" opacity="0.8"/><line x1="1247.5" y1="663.5" x2="1247.5" y2="726.5" stroke="#3c3cc8" stroke-width="3.4" stroke-linecap="round"/><path d="M1245.5 654.5 L1246.5 651 L1249.0 651.5 L1249.5 654.5 Z" fill="#4a4ac0" opacity="0.8"/><path d="M1245.5 735.5 L1246.5 739 L1249.0 738.5 L1249.5 735.5 Z" fill="#4a4ac0" opacity="0.8"/><line x1="1347.3" y1="663.5" x2="1347.3" y2="726.5" stroke="#3c3cc8" stroke-width="3.4" stroke-linecap="round"/><path d="M1345.3 654.5 L1346.3 651 L1348.8 651.5 L1349.3 654.5 Z" fill="#4a4ac0" opacity="0.8"/><path d="M1345.3 735.5 L1346.3 739 L1348.8 738.5 L1349.3 735.5 Z" fill="#4a4ac0" opacity="0.8"/><circle cx="308" cy="695" r="2" fill="#ff2020"/><circle cx="1389" cy="695" r="2" fill="#ff2020"/><g stroke="#a4a4a8" fill="none"><line x1="308.25" y1="750" x2="308.25" y2="867" stroke-width="1.5"/><line x1="1388.75" y1="750" x2="1388.75" y2="867" stroke-width="1.5"/><line x1="309" y1="861.5" x2="827" y2="861.5" stroke-width="1"/><line x1="870" y1="861.5" x2="1388" y2="861.5" stroke-width="1"/></g><path d="M309 861.5 L318 858.7 L318 864.3 Z M1388 861.5 L1379 858.7 L1379 864.3 Z" fill="#a4a4a8"/><text x="848.5" y="865" font-size="10" fill="#8a8a8e" text-anchor="middle" font-family="Liberation Sans">3.250 m</text></svg>
<svg style="left:1338px;top:567px" width="50" height="50" viewBox="0 0 50 50">
<g fill="none" stroke="#6e6e6e" stroke-width="2">
<rect x="2.4" y="2" width="10.4" height="11" rx="2"/><rect x="12.8" y="2" width="23.5" height="11" rx="2"/><rect x="36.3" y="2" width="11.4" height="11" rx="2"/>
<rect x="2.4" y="13" width="10.4" height="23.4" rx="2"/><rect x="12.8" y="13" width="23.5" height="23.4" rx="2"/><rect x="36.3" y="13" width="11.4" height="23.4" rx="2"/>
<rect x="2.4" y="36.4" width="10.4" height="11.6" rx="2"/><rect x="12.8" y="36.4" width="23.5" height="11.6" rx="2"/><rect x="36.3" y="36.4" width="11.4" height="11.6" rx="2"/>
</g>
<text x="25" y="30" font-size="11" font-weight="bold" fill="#44b84a" text-anchor="middle" font-family="Liberation Sans">-Y</text>
</svg>
<div class="a" style="left:1414px;top:557px;width:37px;height:21px;background:#cce4f7;"></div>
<svg style="left:1439px;top:564px" width="8" height="6"><path d="M0 0.5 L8 0.5 L4 5 Z" fill="#111"/></svg>
<div class="a" style="left:1414px;top:581px;width:37px;height:21px;background:#cce4f7;"></div>
<svg style="left:1439px;top:588px" width="8" height="6"><path d="M0 0.5 L8 0.5 L4 5 Z" fill="#111"/></svg>
<div class="a" style="left:1414px;top:605px;width:37px;height:21px;background:#cce4f7;"></div>
<svg style="left:1439px;top:612px" width="8" height="6"><path d="M0 0.5 L8 0.5 L4 5 Z" fill="#111"/></svg>
<div class="a" style="left:1414px;top:629px;width:37px;height:21px;background:#cce4f7;"></div>
<svg style="left:1439px;top:636px" width="8" height="6"><path d="M0 0.5 L8 0.5 L4 5 Z" fill="#111"/></svg>
<div class="a" style="left:1414px;top:904px;width:25px;height:21px;background:#cce4f7;"></div>
<div class="a" style="left:1414px;top:928px;width:25px;height:21px;background:#cce4f7;"></div>
<div class="a" style="left:1201px;top:980px;width:81px;height:21px;background:#e1e1e1;border:2px solid #0078d7"></div>
<div class="a t " style="left:1201.5px;width:80px;text-align:center;top:984.69px;font-size:11px;line-height:13px;color:#000;">OK</div>
<div class="a" style="left:1292px;top:980px;width:81px;height:21px;background:#e1e1e1;border:1px solid #adadad"></div>
<div class="a t " style="left:1292.5px;width:80px;text-align:center;top:984.69px;font-size:11px;line-height:13px;color:#000;letter-spacing:0.382px;">Storno</div>
<div class="a" style="left:1383px;top:980px;width:81px;height:21px;background:#cccccc;border:1px solid #bfbfbf"></div>
<div class="a t " style="left:1383.5px;width:80px;text-align:center;top:984.69px;font-size:11px;line-height:13px;color:#838383;letter-spacing:0.074px;">Použít</div>
<svg style="left:1462px;top:1000px" width="12" height="11"><rect x="9" y="1" width="2" height="2" fill="#b0b0b0"/><rect x="9" y="5" width="2" height="2" fill="#b0b0b0"/><rect x="5" y="5" width="2" height="2" fill="#b0b0b0"/><rect x="9" y="9" width="2" height="2" fill="#b0b0b0"/><rect x="5" y="9" width="2" height="2" fill="#b0b0b0"/><rect x="1" y="9" width="2" height="2" fill="#b0b0b0"/></svg>
<div class="a" style="left:10px;top:979px;width:25px;height:21px;background:#cce4f7;"></div>
<div class="a" style="left:45px;top:979px;width:21px;height:21px;background:#ff0000;border:1.5px solid #000"></div>
<div class="a" style="left:69px;top:979px;width:25px;height:21px;background:#cce4f7;"></div>
<div class="a" style="left:104px;top:979px;width:25px;height:21px;background:#cce4f7;"></div>
<div class="a" style="left:139px;top:979px;width:25px;height:21px;background:#e6e6e6;"></div>
<svg style="left:10px;top:979px" width="25" height="21" viewBox="0 0 25 21"><rect x="4" y="2" width="16" height="5" fill="#9ee08e"/><path d="M6 5.5V7 M9 5.5V7 M12 5.5V7 M15 5.5V7 M18 5.5V7" stroke="#6cb060" stroke-width="1"/>
<text x="3" y="16" font-size="11" font-family="Liberation Sans" fill="#111" stroke="#111" stroke-width="0.5">0</text><rect x="9.3" y="14.3" width="1.6" height="2.2" fill="#111"/>
<text x="11" y="16" font-size="11" font-family="Liberation Sans" fill="#1a2a80" stroke="#1a2a80" stroke-width="0.4" letter-spacing="-0.6">00</text><rect x="11" y="16.8" width="10" height="1.2" fill="#1a2a80"/></svg>
<svg style="left:69px;top:979px" width="25" height="21" viewBox="0 0 25 21"><rect x="4" y="2" width="7" height="7" fill="#808080"/><rect x="4.5" y="2.5" width="3" height="3" fill="#ff0000"/><rect x="7.5" y="2.5" width="3" height="3" fill="#ffff00"/><rect x="4.5" y="5.5" width="3" height="3" fill="#00dd00"/><rect x="7.5" y="5.5" width="3" height="3" fill="#4a60ff"/>
<text x="4" y="16" font-size="10" font-family="Liberation Sans" fill="#111" stroke="#111" stroke-width="0.3">A</text><path d="M4.5 17.5h1 M7 17.5h2 M10 17.5h2" stroke="#111" stroke-width="1"/>
<rect x="11.5" y="7.5" width="8.5" height="6.5" fill="#f4f4f4" stroke="#777" stroke-width="1"/><rect x="13.5" y="7.5" width="6.5" height="2" fill="#2030a0"/></svg>
<svg style="left:104px;top:979px" width="25" height="21" viewBox="0 0 25 21"><rect x="4.5" y="3.5" width="15" height="11" fill="#d8ecff" stroke="#808080" stroke-width="1.4"/>
<path d="M6 9 Q9 5 13 6.5 Q17 7 18 9 Q15 9.5 13 13 Q11 9 6 9 Z" fill="#3a78d8"/><path d="M8 9 Q11 8 13 10" stroke="#e0f0ff" stroke-width="0.8" fill="none"/>
<rect x="11" y="15" width="2" height="2.5" fill="#444"/><rect x="8" y="17.5" width="8" height="1" fill="#808080"/></svg>
<svg style="left:139px;top:979px" width="25" height="21" viewBox="0 0 25 21"><path d="M4.5 17 Q6 18 7 13 L8 7 Q9 3.5 11 4.5" stroke="#555" stroke-width="1.3" fill="none"/><path d="M5.5 9.5h4" stroke="#555" stroke-width="0.8"/>
<ellipse cx="15.5" cy="5" rx="3.6" ry="2.4" fill="none" stroke="#707070" stroke-width="1"/><circle cx="15.5" cy="5" r="1" fill="#707070"/>
<path d="M12 11 Q13 9.5 14 11 L14 16 M16.5 11 L12.5 17 M12.5 17h1.5 M15.5 17 Q17 17 18 15.5" stroke="#666" stroke-width="0.9" fill="none"/></svg>
<svg style="left:0;top:0" width="0" height="0"><defs>
<linearGradient id="wg" x1="0" y1="0" x2="1" y2="1"><stop offset="0" stop-color="#ffffff"/><stop offset="1" stop-color="#d4d4d4"/></linearGradient>
<linearGradient id="wgd" x1="0" y1="0" x2="1" y2="1"><stop offset="0" stop-color="#ffffff"/><stop offset="1" stop-color="#e0e0e0"/></linearGradient>
</defs></svg>
<svg style="left:293px;top:511px" width="25" height="21" viewBox="0 0 25 21"><polygon points="8.30,0.50 9.54,3.86 13.06,3.25 10.78,6.00 13.06,8.75 9.54,8.14 8.30,11.50 7.06,8.14 3.54,8.75 5.83,6.00 3.54,3.25 7.06,3.86" fill="#f8f000" stroke="#a0a040" stroke-width="0.7"/><rect x="9.6" y="7.6" width="9.8" height="9.8" fill="url(#wg)" stroke="#555" stroke-width="1.2"/><rect x="10.2" y="8.2" width="8.6" height="2" fill="#3050e0"/><rect x="10.5" y="8.4" width="2.5" height="1.4" fill="#fff"/></svg>
<svg style="left:321px;top:511px" width="25" height="21" viewBox="0 0 25 21"><rect x="4.6" y="2.6" width="10.8" height="9.8" fill="url(#wg)" stroke="#555" stroke-width="1.2"/><rect x="5.2" y="3.2" width="9.6" height="2" fill="#3050e0"/><rect x="5.5" y="3.4" width="2.5" height="1.4" fill="#fff"/><rect x="8.6" y="7.6" width="10.8" height="9.8" fill="url(#wg)" stroke="#555" stroke-width="1.2"/><rect x="9.2" y="8.2" width="9.6" height="2" fill="#3050e0"/><rect x="9.5" y="8.4" width="2.5" height="1.4" fill="#fff"/></svg>
<svg style="left:349px;top:511px" width="25" height="21" viewBox="0 0 25 21"><path d="M4 12 L11 4.5 L19 4.5 L19 12 Z" fill="#b8bcc8" stroke="#888" stroke-width="0.6"/><path d="M11 6 L17 6 M9 8 L17 8 M8 10 L17 10" stroke="#7a8aff" stroke-width="1" stroke-dasharray="2 1"/>
<rect x="4" y="12" width="15" height="3.5" fill="#a8a8a8" stroke="#777" stroke-width="0.6"/><circle cx="7" cy="13.8" r="0.9" fill="#2020c0"/><circle cx="11" cy="13.8" r="0.9" fill="#2020c0"/>
<rect x="14" y="15" width="3.5" height="5" fill="#8090d0" stroke="#666" stroke-width="0.5"/>
<path d="M15.5 2 L20 2 L18 8 L20.5 8 L16.5 19.5 L17 11 L14.5 11 Z" fill="#f0c020" stroke="#b08000" stroke-width="0.6"/></svg>
<svg style="left:514px;top:511px" width="25" height="21" viewBox="0 0 25 21"><path d="M7 5.5 L17.5 16 M17.5 5.5 L7 16" stroke="#ee1111" stroke-width="3"/></svg>
<svg style="left:15px;top:936px" width="25" height="21" viewBox="0 0 25 21"><polygon points="8.50,1.50 9.62,4.55 12.83,4.00 10.75,6.50 12.83,9.00 9.62,8.45 8.50,11.50 7.38,8.45 4.17,9.00 6.25,6.50 4.17,4.00 7.37,4.55" fill="#f0f0f0" stroke="#a8a8a8" stroke-width="0.7"/><rect x="9.6" y="7.6" width="9.8" height="9.8" fill="url(#wgd)" stroke="#8a8a8a" stroke-width="1.2"/><rect x="10.2" y="8.2" width="8.6" height="2" fill="#8a8a8a"/><rect x="10.5" y="8.4" width="2.5" height="1.4" fill="#fff"/></svg>
<svg style="left:43px;top:936px" width="25" height="21" viewBox="0 0 25 21"><rect x="4.6" y="2.6" width="10.8" height="9.8" fill="url(#wgd)" stroke="#8a8a8a" stroke-width="1.2"/><rect x="5.2" y="3.2" width="9.6" height="2" fill="#8a8a8a"/><rect x="5.5" y="3.4" width="2.5" height="1.4" fill="#fff"/><rect x="8.6" y="7.6" width="10.8" height="9.8" fill="url(#wgd)" stroke="#8a8a8a" stroke-width="1.2"/><rect x="9.2" y="8.2" width="9.6" height="2" fill="#8a8a8a"/><rect x="9.5" y="8.4" width="2.5" height="1.4" fill="#fff"/></svg>
<svg style="left:78px;top:936px" width="25" height="21" viewBox="0 0 25 21"><rect x="4.5" y="3.5" width="6" height="6" fill="#eee" stroke="#8a8a8a" stroke-width="1"/><path d="M5 6 L7 9 L11 3" stroke="#222" stroke-width="1.1" fill="none"/><rect x="4.5" y="11.5" width="6" height="6" fill="#eee" stroke="#8a8a8a" stroke-width="1"/><path d="M5 14 L7 17 L11 11" stroke="#222" stroke-width="1.1" fill="none"/><path d="M11.5 11 L15 15.5 L20.5 6.5" stroke="#10a040" stroke-width="2.6" fill="none" stroke-linejoin="round"/></svg>
<svg style="left:106px;top:936px" width="25" height="21" viewBox="0 0 25 21"><rect x="4.5" y="3.5" width="6" height="6" fill="#eee" stroke="#8a8a8a" stroke-width="1"/><path d="M5 6 L7 9 L11 3" stroke="#222" stroke-width="1.1" fill="none"/><rect x="4.5" y="11.5" width="6" height="6" fill="#eee" stroke="#8a8a8a" stroke-width="1"/><path d="M12 9 Q15 5 20 7.5 M19.5 6 L20.5 8 L18 8.5" stroke="#20a040" stroke-width="1.6" fill="none"/><path d="M20 11 Q17 15 12 12.5 M12.5 14 L11.5 12 L14 11.5" stroke="#20a040" stroke-width="1.6" fill="none"/></svg>
<svg style="left:239px;top:936px" width="25" height="21" viewBox="0 0 25 21"><path d="M7.5 5.5 L17.5 15.5 M17.5 5.5 L7.5 15.5" stroke="#8e8e8e" stroke-width="2.6" stroke-linecap="round"/></svg>
<svg style="left:1036px;top:62px" width="25" height="21" viewBox="0 0 25 21"><path d="M10.6 5.3 H5.5 V15.5 H7.7" stroke="#606060" stroke-width="1.3" fill="none"/><path d="M12 15.3 H19.8 M18 5.3 H19.8" stroke="#606060" stroke-width="1.3"/>
<path d="M15.5 3 L8.8 15.2" stroke="#606060" stroke-width="2.6"/><path d="M15.9 2.3 L14.6 4.6" stroke="#404040" stroke-width="2.8"/><path d="M9 14.6 L8.6 16" stroke="#d0e4f7" stroke-width="1"/></svg>
<svg style="left:1435px;top:62px" width="25" height="21" viewBox="0 0 25 21"><rect x="4.6" y="7.6" width="9.8" height="9.8" fill="url(#wg)" stroke="#555" stroke-width="1.2"/><rect x="5.2" y="8.2" width="8.6" height="2" fill="#fff"/><rect x="5.5" y="8.4" width="2.5" height="1.4" fill="#fff"/><circle cx="13.5" cy="9.6" r="1.1" fill="#3050f0"/>
<path d="M5 9 Q6 6 9 5.5 Q12 4 15 4 Q17 5 16.5 8 Q16 10 14 11.5 Q12 11 11 9.5 Z" fill="#d8b890" stroke="#b09070" stroke-width="0.5"/>
<path d="M14 3.5 L18 3.5 L19.5 9 L16 9.5 Z" fill="#5a80d8" opacity="0.9"/></svg>
<svg style="left:1081px;top:510px" width="25" height="21" viewBox="0 0 25 21"><rect x="4" y="2" width="16" height="16" fill="#f4f4f4"/><rect x="4" y="2" width="8" height="8" fill="#6a9040"/><rect x="4" y="2" width="8" height="3" fill="#60a0e0"/><rect x="5" y="7" width="5" height="3" fill="#9a6a40"/><circle cx="6" cy="3.5" r="1" fill="#f0e020"/>
<rect x="12" y="2" width="8" height="8" fill="#d0e0d0" opacity="0.8"/><rect x="4" y="10" width="8" height="8" fill="#c8d4e8"/>
<path d="M13 11 L19 11 L20 16 L16 18 L13 17 Z" fill="#4a78c8" stroke="#2a4a8a" stroke-width="0.7"/><path d="M15 13 L18 13 L18 16" stroke="#fff" stroke-width="0.7" fill="none"/></svg>
<svg style="left:1330px;top:510px" width="25" height="21" viewBox="0 0 25 21"><path d="M5.5 5 L19 5 L14 10.5 L14 16 L10.5 16 L10.5 10.5 Z" fill="#5a7fc2"/><path d="M10.5 11 L14 11 L14 16 L10.5 16 Z" fill="#80a8e8"/></svg>
<svg style="left:1358px;top:510px" width="25" height="21" viewBox="0 0 25 21"><path d="M13.5 3.2 H8.5 V15.2 H10.5" stroke="#283878" stroke-width="1.3" fill="none"/>
<circle cx="11" cy="9.5" r="1.6" fill="#e0508a"/><path d="M11 9.5 H18 M16.2 8 L18 9.5 L16.2 11 M11 9.5 V17 M9.5 15.5 L11 17 L12.5 15.5" stroke="#e0508a" stroke-width="0.9" fill="none"/>
<path d="M16 3.5 L17 5.5 M18.5 3.5 L16.5 7.5" stroke="#e0508a" stroke-width="0.8"/><path d="M12.5 15.5 H15 L12.5 18 H15" stroke="#e0508a" stroke-width="0.7" fill="none"/></svg>
<svg style="left:1386px;top:510px" width="25" height="21" viewBox="0 0 25 21"><text x="12.8" y="7.3" font-size="5.5" font-weight="bold" text-anchor="middle" font-family="Liberation Sans" fill="#222">100</text>
<path d="M5.5 6.5 V13.5 M19.5 6.5 V13.5" stroke="#111" stroke-width="1.3"/><path d="M6 9.5 H19" stroke="#111" stroke-width="0.9"/><path d="M6 9.5 L8 8 L8 11 Z M19 9.5 L17 8 L17 11 Z" fill="#111"/>
<rect x="5" y="15" width="15" height="2" fill="#283070"/></svg>
<svg style="left:1414px;top:510px" width="37" height="21" viewBox="0 0 37 21"><rect x="5" y="2" width="10" height="3.5" fill="#606060"/><path d="M2 8 Q2 6.5 3.5 6.5 H16.5 Q18 6.5 18 8 V13.5 H2 Z" fill="#606060"/><rect x="4.5" y="11" width="11" height="7" fill="#606060"/><rect x="5.8" y="11.6" width="8.4" height="5.2" fill="#fff"/><path d="M7 13.5 H13 M7 15.3 H13" stroke="#606060" stroke-width="0.8"/><rect x="14.5" y="8" width="2" height="1" fill="#fff"/>
<path d="M26 8 L33 8 L29.5 12 Z" fill="#111"/></svg>
<svg style="left:1414px;top:557px" width="37" height="21" viewBox="0 0 37 21"><path d="M2.5 6 L6.5 3 L17.5 3 L17.5 14.5 L13.5 17.5 L2.5 17.5 Z" fill="#b6c2dc" stroke="#8a98b8" stroke-width="1"/>
<path d="M2.5 6 H13.5 V17.5 M13.5 6 L17.5 3" stroke="#8a98b8" stroke-width="1" fill="none"/><path d="M2.5 14.5 L6.5 11.5 V3 M6.5 11.5 H17.5" stroke="#a4b0cc" stroke-width="0.7" fill="none"/></svg>
<svg style="left:1414px;top:581px" width="37" height="21" viewBox="0 0 37 21"><path d="M5 4.5 H15" stroke="#e0401a" stroke-width="1.3"/><path d="M14 1.8 L18 4.5 L14 7.2 Z" fill="#e0401a"/>
<path d="M4.5 5 V13" stroke="#1a40d0" stroke-width="1.3"/><path d="M1.8 12.5 L4.5 16.5 L7.2 12.5 Z" fill="#1a40d0"/>
<circle cx="4.5" cy="4.5" r="2.6" fill="#10a040"/>
<text x="8.5" y="15" font-size="8.5" font-weight="bold" font-family="Liberation Sans" fill="#111">-Y</text></svg>
<svg style="left:1414px;top:605px" width="37" height="21" viewBox="0 0 37 21"><path d="M2 5 L5 2.5 L12 2.5 L12 8.5 L17.5 8.5 L17.5 15.5 L14.5 18 L5 18 L2 16 Z" fill="#c4d4ec" stroke="#9eb0d0" stroke-width="0.8"/>
<path d="M5 5 H9.5 V10.5 H14.5 V18" fill="none" stroke="#8ea2c6" stroke-width="0.8"/><rect x="5.3" y="5.3" width="4" height="5" fill="#a2b4d6"/><rect x="5.3" y="12" width="9" height="5.7" fill="#aabcdc"/><path d="M2 5 L5 5 L5 18" fill="none" stroke="#9eb0d0" stroke-width="0.8"/></svg>
<svg style="left:1414px;top:629px" width="37" height="21" viewBox="0 0 37 21"><path d="M2.5 7 V15 M17.5 7 V15" stroke="#707090" stroke-width="1.2"/><path d="M3 10.5 H17" stroke="#8080a0" stroke-width="0.9"/><path d="M3 10.5 L5.5 9 V12 Z M17 10.5 L14.5 9 V12 Z" fill="#8080a0"/>
<path d="M8.5 4 L11.5 8 M11.5 4 L8.5 8" stroke="#707090" stroke-width="1"/></svg>
<svg style="left:1440px;top:565.5px" width="7" height="4"><path d="M0 0 L7 0 L3.5 3.5 Z" fill="#111"/></svg>
<svg style="left:1440px;top:589.5px" width="7" height="4"><path d="M0 0 L7 0 L3.5 3.5 Z" fill="#111"/></svg>
<svg style="left:1440px;top:613.5px" width="7" height="4"><path d="M0 0 L7 0 L3.5 3.5 Z" fill="#111"/></svg>
<svg style="left:1440px;top:637.5px" width="7" height="4"><path d="M0 0 L7 0 L3.5 3.5 Z" fill="#111"/></svg>
<svg style="left:1414px;top:904px" width="25" height="21" viewBox="0 0 25 21"><path d="M4 2.3 H8.7 M13 2.3 H18 M4 5.3 H5" stroke="#000080" stroke-width="1.2"/>
<rect x="4.6" y="8.6" width="12.6" height="3" fill="#f4f4f4" stroke="#777" stroke-width="1"/>
<path d="M5 6 Q8 3 12 3.5 Q15 3 16.5 6 Q16 9 13 10 Q10 10.5 9 8.5 Q7 7.5 5 6 Z" fill="#e0c098" stroke="#b09070" stroke-width="0.5"/><path d="M16 3 L19 4 L20 9 L17 9 Z" fill="#5a80d8"/>
<path d="M4 14.3 H17.7 M6.9 17.4 H14.9" stroke="#000080" stroke-width="1.2"/></svg>
<svg style="left:1414px;top:928px" width="25" height="21" viewBox="0 0 25 21"><circle cx="9" cy="8.2" r="4.3" fill="none" stroke="#646464" stroke-width="1.5"/><path d="M12 11.5 L17.3 16.5" stroke="#646464" stroke-width="1.8" stroke-linecap="round"/>
<path d="M12.3 2.5 L18.7 9.3 M18.7 2.5 L12.3 9.3" stroke="#ff0000" stroke-width="2.4"/></svg>
</body></html>
